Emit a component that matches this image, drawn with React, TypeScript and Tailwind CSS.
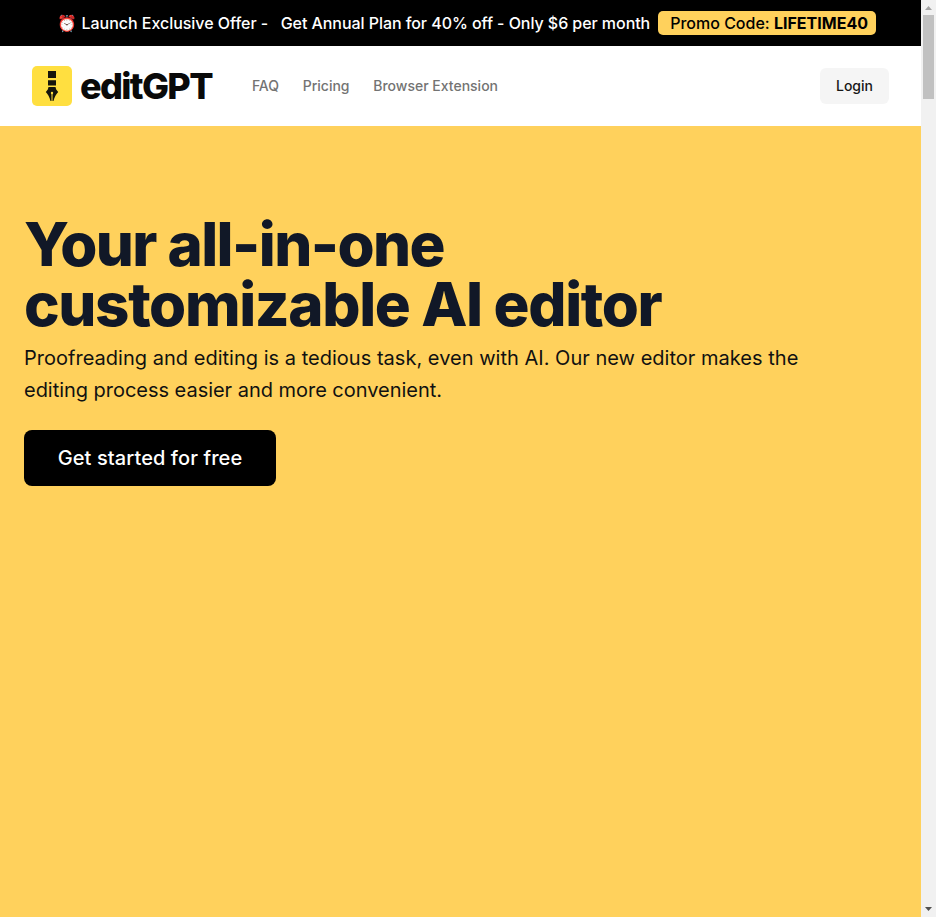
export default function App() {
  return (
    <div className="flex h-[917px] w-full overflow-hidden bg-[#ffd15c] font-['Inter',sans-serif] text-[#111827]">
      <div className="flex min-w-0 flex-1 flex-col">
        <div className="flex h-[46px] shrink-0 items-center bg-black pl-[57px] font-medium whitespace-pre text-white">
          <span className="mr-[4.500px] text-base">⏰</span>
          <span className="tracking-[-0.030px]">Launch Exclusive Offer -</span>
          <span className="ml-[12.500px] tracking-[-0.060px]">Get Annual Plan for 40% off - Only $6 per month</span>
          <span className="ml-2 rounded-[5px] bg-[#ffd15c] pr-2 pl-3 text-black">Promo Code: <b>LIFETIME40</b></span>
        </div>
        <header className="flex h-20 shrink-0 items-center bg-white px-8">
          <svg width="40" height="40" viewBox="0 0 40 40">
            <rect width="40" height="40" rx="5" fill="#ffdf40" />
            <path d="M16 5H24V12H16ZM16 14.300H24V19.500H16Z" fill="#15150c" />
            <path d="M16.500 21H23.500L24.200 23.500L26.200 26C24.300 28 22.400 31 21.500 35H18.500C17.600 31 15.700 28 13.800 26L15.800 23.500Z" fill="#15150c" />
            <path d="M20 35.500V27.500" stroke="#ffdf40" strokeWidth="1" />
            <circle cx="20" cy="27" r="1.200" fill="#ffdf40" />
          </svg>
          <span className="ml-2 text-4xl font-extrabold tracking-[-1.650px] text-[#0a0a0a]">editGPT</span>
          <nav className="ml-10 flex gap-[23.700px] text-sm font-medium text-[#737373]">
            <a>FAQ</a><a>Pricing</a><a>Browser Extension</a>
          </nav>
          <button className="ml-auto h-9 rounded-md bg-[#f5f5f5] px-4 text-sm font-medium text-[#171717]">Login</button>
        </header>
        <main className="px-6 pt-[88px]">
          <h1 className="text-6xl leading-[60px] font-extrabold">
            <span className="tracking-[-1.570px]">Your all-in-one</span><br />
            <span className="tracking-[-1.360px]">customizable AI editor</span>
          </h1>
          <p className="mt-2 text-xl leading-8 text-[#111111]">
            <span className="tracking-[0.020px]">Proofreading and editing is a tedious task, even with AI. Our new editor makes the</span><br />
            <span className="tracking-[-0.030px]">editing process easier and more convenient.</span>
          </p>
          <button className="mt-6 h-14 w-[252px] rounded-lg bg-black text-xl font-medium tracking-[0.1px] text-white">Get started for free</button>
        </main>
      </div>
      <div className="flex w-[15px] shrink-0 flex-col items-center bg-[#f1f1f1]">
        <svg width="15" height="15"><path d="M4 10h7L7.500 6z" fill="#a3a3a3" /></svg>
        <div className="h-[84px] w-[11px] bg-[#c1c1c1]" />
        <svg className="mt-auto" width="15" height="15"><path d="M4 5h7L7.500 9z" fill="#505050" /></svg>
      </div>
    </div>
  );
}
